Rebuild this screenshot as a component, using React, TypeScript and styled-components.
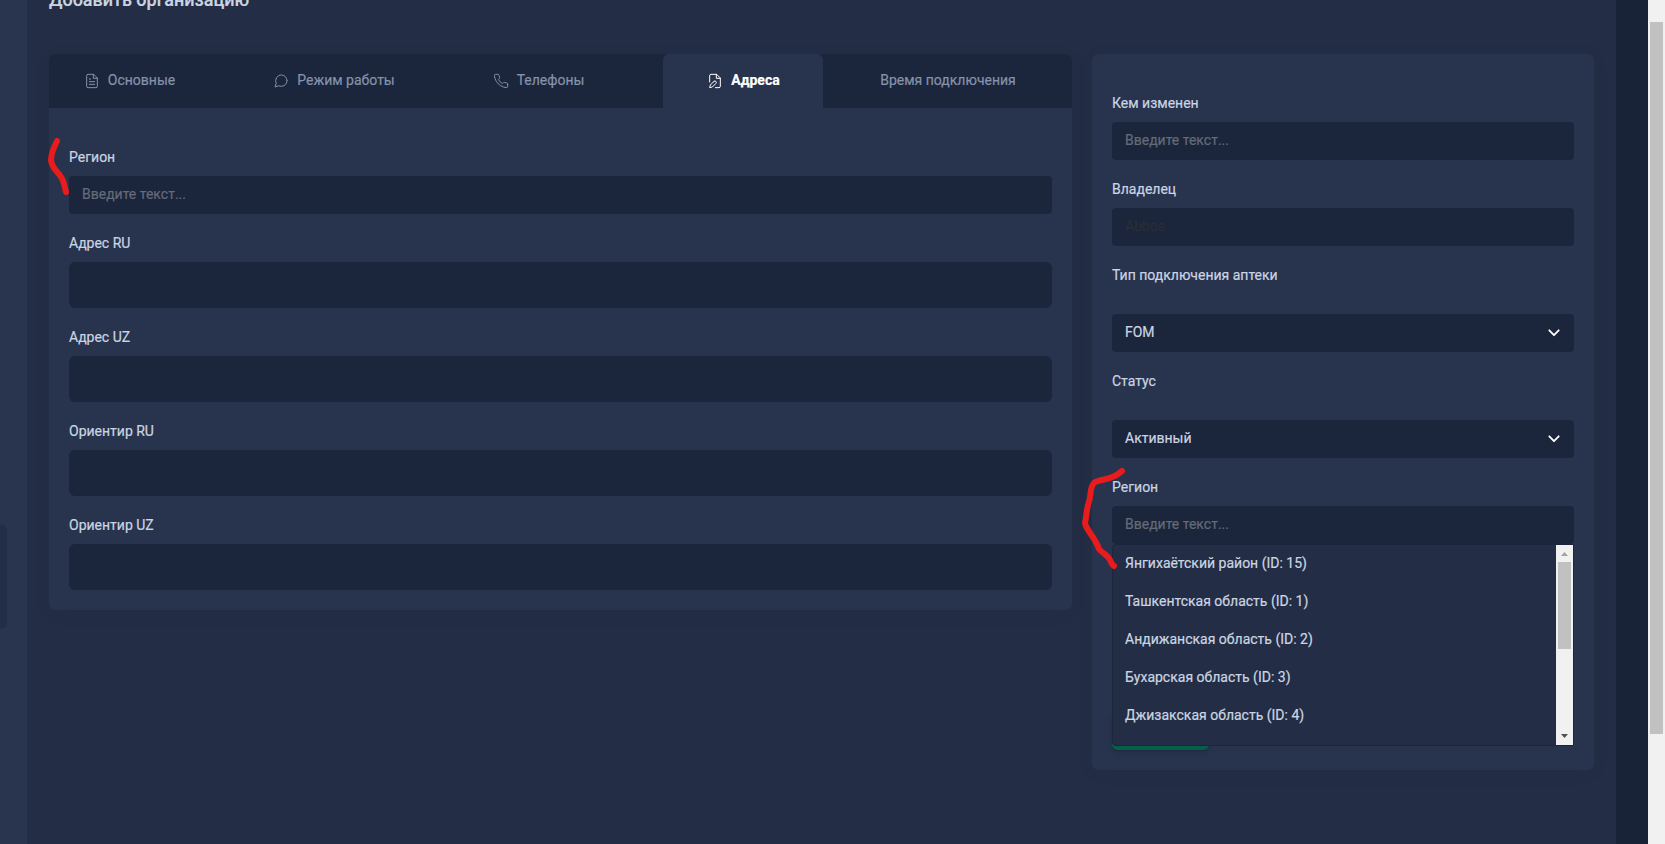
import React from "react";
import styled, { createGlobalStyle } from "styled-components";

const Global = createGlobalStyle`
  *, *::before, *::after { box-sizing: border-box; }
  body { margin: 0; overflow: hidden; background: #1a2336; }
  #root { font-family: Roboto, "Liberation Sans", sans-serif; font-size: 14px; line-height: 20px; color: #cbd5e1; -webkit-text-stroke: 0.2px; }
`;

const Page = styled.div`
  position: relative;
  display: flex;
  width: 1665px;
  height: 844px;
  background: #192337;
  overflow: hidden;
`;

const Sidebar = styled.aside`
  flex: 0 0 27px;
  background: #29344e;
  padding-top: 525px;
`;

const SidebarMark = styled.div`
  width: 7px;
  height: 104px;
  background: #232d45;
  border-radius: 0 6px 6px 0;
`;

const Main = styled.main`
  flex: 0 0 1589px;
  padding: 0 22px;
  background: #232d45;
`;

const Title = styled.h2`
  margin: -14px 0 40px;
  font-size: 18px;
  line-height: 28px;
  font-weight: 500;
  color: #cbd5e1;
`;

const Columns = styled.div`
  display: grid;
  grid-template-columns: 1023px 502px;
  gap: 20px;
  align-items: start;
`;

const Card = styled.section`
  border-radius: 6px;
  background: #28334e;
  box-shadow: 0 3px 20px #0000000b;
`;

const Tabs = styled.nav`
  display: flex;
  height: 54px;
  border-radius: 6px 6px 0 0;
  background: #1b253b;
`;

const Tab = styled.div<{ $width: number; $active?: boolean }>`
  display: flex;
  flex: 0 0 ${(p) => p.$width}px;
  align-items: center;
  justify-content: center;
  gap: 8px;
  padding: 0 0 2px 1px;
  border-radius: 6px 6px 0 0;
  white-space: nowrap;
  color: ${(p) => (p.$active ? "#fff" : "#8592ab")};
  background: ${(p) => (p.$active ? "#28334e" : "transparent")};
  font-weight: ${(p) => (p.$active ? 700 : 400)};
`;

const TabIcon = styled.svg`
  width: 16px;
  height: 16px;
  margin-top: 1px;
  fill: none;
  stroke: currentColor;
  stroke-width: 1.5;
  stroke-linecap: round;
  stroke-linejoin: round;
`;

const Form = styled.div`
  display: flex;
  flex-direction: column;
  gap: 20px;
  padding: 40px 20px 20px;
`;

const Field = styled.div<{ $gap?: number }>`
  position: relative;
  display: flex;
  flex-direction: column;
  gap: ${(p) => p.$gap ?? 8}px;
`;

const Label = styled.label`
  height: 20px;
  font-size: 14px;
  line-height: 18px;
`;

const Control = styled.div<{ $tall?: boolean; $tone?: string }>`
  display: flex;
  align-items: center;
  justify-content: space-between;
  height: ${(p) => (p.$tall ? 46 : 38)}px;
  padding: 0 13px 2px;
  border-radius: ${(p) => (p.$tall ? 6 : 4)}px;
  background: #1b253b;
  color: ${(p) => p.$tone ?? "#cbd5e1"};
`;

const Chevron = styled.svg`
  width: 12px;
  height: 8px;
  margin: 2px 1px 0 0;
  fill: none;
  stroke: #fff;
  stroke-width: 1.8;
  stroke-linecap: round;
  stroke-linejoin: round;
`;

const Dropdown = styled.div`
  position: absolute;
  top: 66px;
  left: 0;
  z-index: 1;
  display: flex;
  width: 462px;
  height: 202px;
  border: 1px solid #1b253b;
  border-radius: 4px 0 0 4px;
  background: #232d45;
  overflow: hidden;
`;

const Options = styled.ul`
  flex: 1;
  margin: 0;
  padding: 0;
  list-style: none;
`;

const Option = styled.li`
  height: 38px;
  padding: 8px 12px 10px;
`;

const ListScroll = styled.div`
  display: flex;
  flex-direction: column;
  align-items: center;
  width: 17px;
  background: #f1f1f1;
`;

const ScrollArrow = styled.svg<{ $dim?: boolean }>`
  width: 17px;
  height: 17px;
  fill: ${(p) => (p.$dim ? "#a3a3a3" : "#505050")};
`;

const ListThumb = styled.div`
  width: 13px;
  height: 87px;
  margin-bottom: auto;
  background: #c1c1c1;
`;

const SaveButton = styled.div`
  width: 97px;
  height: 38px;
  margin-top: 148px;
  border-radius: 6px;
  background: #065f46;
  box-shadow: 0 1px 2px #0000000d, 0 3px 6px #00000022;
`;

const PageScroll = styled.div`
  width: 17px;
  margin-left: auto;
  padding: 22px 2px 0;
  background: #f1f1f1;
`;

const PageThumb = styled.div`
  height: 712px;
  background: #c1c1c1;
`;

const Marker = styled.svg`
  position: absolute;
  inset: 0;
  z-index: 2;
  fill: none;
  stroke: #e81c1c;
  stroke-width: 6;
  stroke-linecap: round;
  stroke-linejoin: round;
`;

const MUTED = "#646b79";
const REGIONS = [
  "Янгихаётский район (ID: 15)",
  "Ташкентская область (ID: 1)",
  "Андижанская область (ID: 2)",
  "Бухарская область (ID: 3)",
  "Джизакская область (ID: 4)",
];

const SelectArrow = () => (
  <Chevron viewBox="0 0 12 8">
    <path d="M1.3 1.3 6 6.2 10.7 1.3" />
  </Chevron>
);

export default function App() {
  return (
    <Page>
      <Global />
      <Sidebar>
        <SidebarMark />
      </Sidebar>
      <Main>
        <Title>Добавить организацию</Title>
        <Columns>
          <Card>
            <Tabs>
              <Tab $width={160}>
                <TabIcon viewBox="0 0 24 24">
                  <path d="M14 2H6a2 2 0 0 0-2 2v16a2 2 0 0 0 2 2h12a2 2 0 0 0 2-2V8zM14 2v6h6M16 13H8M16 17H8M10 9H8" />
                </TabIcon>
                Основные
              </Tab>
              <Tab $width={249}>
                <TabIcon viewBox="0 0 24 24">
                  <path d="M21 11.5a8.38 8.38 0 0 1-.9 3.8 8.5 8.5 0 0 1-7.6 4.7 8.38 8.38 0 0 1-3.8-.9L3 21l1.9-5.7a8.38 8.38 0 0 1-.9-3.8 8.5 8.5 0 0 1 4.7-7.6 8.38 8.38 0 0 1 3.8-.9h.5a8.48 8.48 0 0 1 8 8z" />
                </TabIcon>
                Режим работы
              </Tab>
              <Tab $width={160}>
                <TabIcon viewBox="0 0 24 24">
                  <path d="M22 16.92v3a2 2 0 0 1-2.18 2 19.79 19.79 0 0 1-8.63-3.07 19.5 19.5 0 0 1-6-6 19.79 19.79 0 0 1-3.07-8.67A2 2 0 0 1 4.11 2h3a2 2 0 0 1 2 1.72c.13.96.36 1.9.7 2.81a2 2 0 0 1-.45 2.11L8.09 9.91a16 16 0 0 0 6 6l1.27-1.27a2 2 0 0 1 2.11-.45c.91.34 1.85.57 2.81.7A2 2 0 0 1 22 16.92z" />
                </TabIcon>
                Телефоны
              </Tab>
              <Tab $width={45} />
              <Tab $width={160} $active>
                <TabIcon viewBox="0 0 24 24">
                  <path d="M4 13.5V4a2 2 0 0 1 2-2h8.5L20 7.5V20a2 2 0 0 1-2 2h-5.5M14 2v6h6M10.42 12.61a2.1 2.1 0 1 1 2.97 2.97L7.95 21 4 22l.99-3.95 5.43-5.44Z" />
                </TabIcon>
                Адреса
              </Tab>
              <Tab $width={249}>Время подключения</Tab>
            </Tabs>
            <Form>
              <Field>
                <Label>Регион</Label>
                <Control $tone={MUTED}>Введите текст...</Control>
              </Field>
              {["Адрес RU", "Адрес UZ", "Ориентир RU", "Ориентир UZ"].map((label) => (
                <Field key={label}>
                  <Label>{label}</Label>
                  <Control $tall />
                </Field>
              ))}
            </Form>
          </Card>
          <Card>
            <Form>
              <Field>
                <Label>Кем изменен</Label>
                <Control $tone={MUTED}>Введите текст...</Control>
              </Field>
              <Field>
                <Label>Владелец</Label>
                <Control $tone="#2a2e35">Abbos</Control>
              </Field>
              <Field $gap={28}>
                <Label>Тип подключения аптеки</Label>
                <Control>
                  FOM
                  <SelectArrow />
                </Control>
              </Field>
              <Field $gap={28}>
                <Label>Статус</Label>
                <Control>
                  Активный
                  <SelectArrow />
                </Control>
              </Field>
              <Field>
                <Label>Регион</Label>
                <Control $tone={MUTED}>Введите текст...</Control>
                <Dropdown>
                  <Options>
                    {REGIONS.map((region) => (
                      <Option key={region}>{region}</Option>
                    ))}
                  </Options>
                  <ListScroll>
                    <ScrollArrow $dim viewBox="0 0 17 17">
                      <path d="M5 11h7L8.500 7z" />
                    </ScrollArrow>
                    <ListThumb />
                    <ScrollArrow viewBox="0 0 17 17">
                      <path d="M5 6h7l-3.500 4z" />
                    </ScrollArrow>
                  </ListScroll>
                </Dropdown>
              </Field>
              <SaveButton />
            </Form>
          </Card>
        </Columns>
      </Main>
      <PageScroll>
        <PageThumb />
      </PageScroll>
      <Marker width="1665" height="844" viewBox="0 0 1665 844">
        <path d="M57 141C53 149 51 154 51 160C52 171 62 173 64 184L66 192" />
        <path d="M1122 471C1110 482 1100 478 1094 483C1089 488 1092 495 1088 505C1086 514 1086 519 1085 523C1086 530 1095 537 1099 549C1103 554 1107 554 1110 560Q1112 565 1114 566" />
      </Marker>
    </Page>
  );
}
